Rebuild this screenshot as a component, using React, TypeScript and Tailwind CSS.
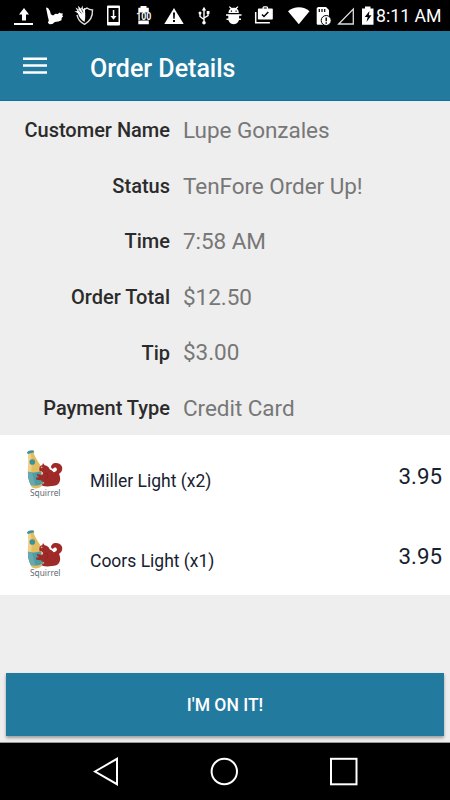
import React from "react";

type IconProps = {
  width?: number;
  children: React.ReactNode;
};

function StatusIcon({ width = 30, children }: IconProps) {
  return (
    <svg width={width} height="31" viewBox={`0 0 ${width} 31`} fill="#fff" className="shrink-0">
      {children}
    </svg>
  );
}

function StatusBar() {
  return (
    <div className="flex h-[31px] items-center bg-black pl-[9px] text-white">
      {/* Upload */}
      <StatusIcon>
        <path d="M15 8l5 6.500h-3V20.500h-4V14.500h-3z" />
        <path d="M5 23h19v2H5z" />
      </StatusIcon>
      {/* Bird */}
      <StatusIcon>
        <path d="M7 7.500l2 .5 2 3 .8 3.300 2.200 1.200 2.500-1.800 2.200.3 2-1.500.7.8 2.500.2-.6 1.800.8 1.200-1.400 1.200-.2 2.500-3 1.400-3.600.4-2.500 2-3 .2-1.500-1.500.9-2.200-1-4-.9-4.500z" />
      </StatusIcon>
      {/* Shield */}
      <StatusIcon>
        <path d="M15 9.500l3-1.500c1.500 1.300 3.200 1.800 5.500 2 .3 6.500-2 11.200-8 14.300-4.500-2.300-6.800-5.500-7.500-9.500" fill="none" stroke="#ddd" strokeWidth="1.400" />
        <path d="M16 10.500c.3 4 .5 8-.5 11.500-3.500-2-5.500-5-6.500-8.500L5.500 11l3 .3L6.500 7.500l3.200 2L9 5.800l3 3L13.500 5.500l.5 3.800 2-1.300z" />
        <path d="M9 9.500l3.500 4M12.500 9l1.500 3.500" stroke="#000" strokeWidth=".6" />
      </StatusIcon>
      {/* Device download */}
      <StatusIcon>
        <path fillRule="evenodd" d="M9 5.500h11a1 1 0 011 1v18a1 1 0 01-1 1H9a1 1 0 01-1-1v-18a1 1 0 011-1zM9.500 8v14h10V8z" />
        <path d="M13.800 10h1.500v6h2.200l-3 3.700-3-3.700h2.300z" />
      </StatusIcon>
      {/* Battery 100 */}
      <StatusIcon>
        <path d="M11.500 6h6v1.800h2.300v4.700H9.300V7.800h2.200zM9.300 20.500h10.500v3.800H9.300z" />
        <text x="7.200" y="20.200" textLength="15" lengthAdjust="spacingAndGlyphs" className="font-['Roboto',sans-serif] text-[10px] font-bold">100</text>
      </StatusIcon>
      {/* Warning */}
      <StatusIcon>
        <path d="M15 8l9.700 16H5.300z" />
        <path d="M14 12.500h2l-.3 6.200h-1.400zM14 20h2v2h-2z" fill="#000" />
      </StatusIcon>
      {/* USB */}
      <StatusIcon>
        <path d="M15 9v14M15 19.500l-4-3v-3M15 18l4-2.500V12" fill="none" stroke="#fff" strokeWidth="1.400" />
        <path d="M15 6.800l2.200 3.700h-4.400zM17.700 11h2.800v3h-2.800z" />
        <circle cx="11" cy="13" r="1.500" />
        <circle cx="15" cy="22.800" r="1.800" />
      </StatusIcon>
      {/* Debug bug */}
      <StatusIcon>
        <path fillRule="evenodd" d="M9.500 13c0-2.100.8-3.400 2-4.200L9.900 7l.8-.7 2.200 1.800c1-.4 2.500-.4 3.500 0l2.200-1.800.8.7-1.600 1.800c1.200.8 2 2.100 2 4.200zm2.300-2.400v1.200H13v-1.200zm4.700 0v1.200h1.200v-1.200z" />
        <path d="M9.300 14.300h10.800v4.200c0 3.300-2.200 5.700-5.400 5.700s-5.400-2.400-5.400-5.700z" />
        <path d="M7 14.300h3v1.500H7zM19.500 14.300h3v1.500h-3zM7.500 18.500h3V20h-3zM19 18.500h3V20h-3z" />
      </StatusIcon>
      {/* Shopping bag check */}
      <StatusIcon>
        <path fillRule="evenodd" d="M9.700 8.500h3.800V7.300l1-1.100h3.600l1 1.100v1.200H23a.8.8 0 01.8.8v9.400a.8.8 0 01-.8.800H9.700a.8.8 0 01-.8-.8V9.300a.8.8 0 01.8-.8zm5.100 0h3v-1h-3z" />
        <path d="M6.700 12v10.800h14.200" fill="none" stroke="#fff" strokeWidth="1.500" />
        <path d="M13 14.500l2 2 4.300-4.500" fill="none" stroke="#000" strokeWidth="1.500" />
      </StatusIcon>
      {/* Wifi */}
      <StatusIcon width={34}>
        <path d="M9 11.300c6-5.400 16-5.400 21.500 0L19.800 24.300z" />
      </StatusIcon>
      {/* SD card alert */}
      <StatusIcon width={21}>
        <path d="M5 7h8l3 3v6l-3 2-1 6.700H4.500l-.8-.8V8.300z" />
        <path d="M6.300 9v3M9 9v3M11.700 9v3" stroke="#000" strokeWidth="1.200" />
        <circle cx="13.200" cy="20.500" r="5" stroke="#000" />
        <path d="M13.200 17.500v3.800M13.200 22.300v1.400" stroke="#000" strokeWidth="1.400" />
      </StatusIcon>
      {/* Signal */}
      <StatusIcon width={25}>
        <path d="M4.700 24L19.300 9v15z" fill="none" stroke="#ddd" strokeWidth="1.300" />
      </StatusIcon>
      {/* Battery charging */}
      <StatusIcon width={17}>
        <path d="M6 6.500h5.500v2H14.500v16.300H3V8.500h3z" />
        <path d="M10.500 11l-4.800 6h3l-1.200 5 5-6.800H9.800z" fill="#000" />
      </StatusIcon>
      <span className="mt-[3px] whitespace-nowrap text-[17.700px] leading-none">8:11 AM</span>
    </div>
  );
}

function AppBar() {
  return (
    <header className="flex h-[70px] items-center border-b border-[#0d719b] bg-[#237a9f] pl-[23px] text-white">
      <button aria-label="Menu">
        <svg width="24" height="18" viewBox="0 0 24 18" fill="none" stroke="#fff" strokeWidth="2.500">
          <path d="M0 1.800h24M0 8.600h24M0 15.400h24" />
        </svg>
      </button>
      <h1 className="ml-[43px] mt-[5px] text-[25px] font-medium leading-none">Order Details</h1>
    </header>
  );
}

const details = [
  { label: "Customer Name", value: "Lupe Gonzales" },
  { label: "Status", value: "TenFore Order Up!" },
  { label: "Time", value: "7:58 AM" },
  { label: "Order Total", value: "$12.50" },
  { label: "Tip", value: "$3.00" },
  { label: "Payment Type", value: "Credit Card" },
];

const items = [
  { name: "Miller Light (x2)", price: "3.95" },
  { name: "Coors Light (x1)", price: "3.95" },
];

function SquirrelLogo() {
  return (
    <svg width="42" height="50" viewBox="0 0 42 50" className="shrink-0">
      <g transform="translate(-4 -5) scale(.3333)">
        {/* Bottle */}
        <path d="M24 25l17-4c2 18 18 30 23 48l6 45c0 14-26 22-36 11C25 104 23 90 24 74c3-20 2-32 0-49z" fill="#e2bc60" />
        <path d="M24 25l8-2c3 17 4 36 2 55l8 44-6-2c-11-20-14-30-12-46 3-20 2-32 0-49z" fill="#efd08a" />
        <path d="M21 22c3-5 15-8 20-5l2 5-20 5z" fill="#3d929a" />
        <path d="M24 80c12 4 26 3 38-2l8 36c-10 8-28 10-38 5-6-12-9-26-8-39z" fill="#4d9ba3" />
        <path d="M24 80l12 2 10 39c-6 0-11-1-14-3-6-12-9-25-8-38z" fill="#67a9ae" />
        <circle cx="37" cy="51" r="8.500" fill="#3d929a" />
        {/* Squirrel */}
        <path d="M58 71c0-6 4-10 9-11l2-6 5 7c9 1 13 6 15 12 5 2 9 5 12 9 9-2 12-8 8-13-3-3-8-1-10 3-7-2-8-9-3-13 8-8 24-5 29 4 5 11-1 19-8 24 7 15 3 28-8 34-14 3-31 5-42 1l-1-4 7-4-10-8-14-2-1-6 9-1-6-6c-1-3 2-5 5-3l10 3 3-7-5-6c-5 1-7-3-6-7z" fill="#9f2b29" />
        <path d="M75 84c8 2 11 8 7 14l-9 5" fill="none" stroke="#84221f" strokeWidth="2" />
        <circle cx="65" cy="67" r="2.500" fill="#e0a39b" />
      </g>
      <text x="6" y="46.400" textLength="30.500" lengthAdjust="spacingAndGlyphs" className="fill-[#606a70] font-['Noto_Sans',sans-serif] text-[8px]">Squirrel</text>
    </svg>
  );
}

export default function App() {
  return (
    <div className="flex h-[800px] w-[450px] flex-col overflow-hidden bg-[#eee] font-['Roboto',sans-serif]">
      <StatusBar />
      <AppBar />

      <dl className="flex h-[334px] flex-col pt-[1.500px]">
        {details.map((row) => (
          <div key={row.label} className="flex h-[55.600px] shrink-0 items-center">
            <dt className="w-[170px] text-right text-[20px] font-medium text-[#2b2b2b]">{row.label}</dt>
            <dd className="ml-[13px] mt-px text-[22.500px] tracking-[-0.050px] text-[#777]">{row.value}</dd>
          </div>
        ))}
      </dl>

      <ul className="bg-white text-[#17222f]">
        {items.map((item) => (
          <li key={item.name} className="flex h-20 items-center pl-6 pr-2">
            <SquirrelLogo />
            <span className="ml-6 mt-[12px] text-[17.500px]">{item.name}</span>
            <span className="ml-auto mt-[4px] text-[22.300px]">{item.price}</span>
          </li>
        ))}
      </ul>

      <div className="mt-auto px-[6px] pb-[6px]">
        <button className="h-[63px] w-full bg-[#237a9f] pt-[2px] text-[17.500px] font-medium text-white shadow-[0_2px_3px_rgba(0,0,0,0.35)]">
          I'M ON IT!
        </button>
      </div>

      <nav className="flex h-[58px] items-center border-t border-[#999] bg-black">
        <svg width="450" height="57" viewBox="0 0 450 57" fill="none" stroke="#fff" strokeWidth="2">
          <path d="M95 28.500l22-12.700v25.400z" />
          <circle cx="224.300" cy="28.500" r="12.700" />
          <rect x="331" y="15.800" width="25.500" height="25.500" />
        </svg>
      </nav>
    </div>
  );
}
